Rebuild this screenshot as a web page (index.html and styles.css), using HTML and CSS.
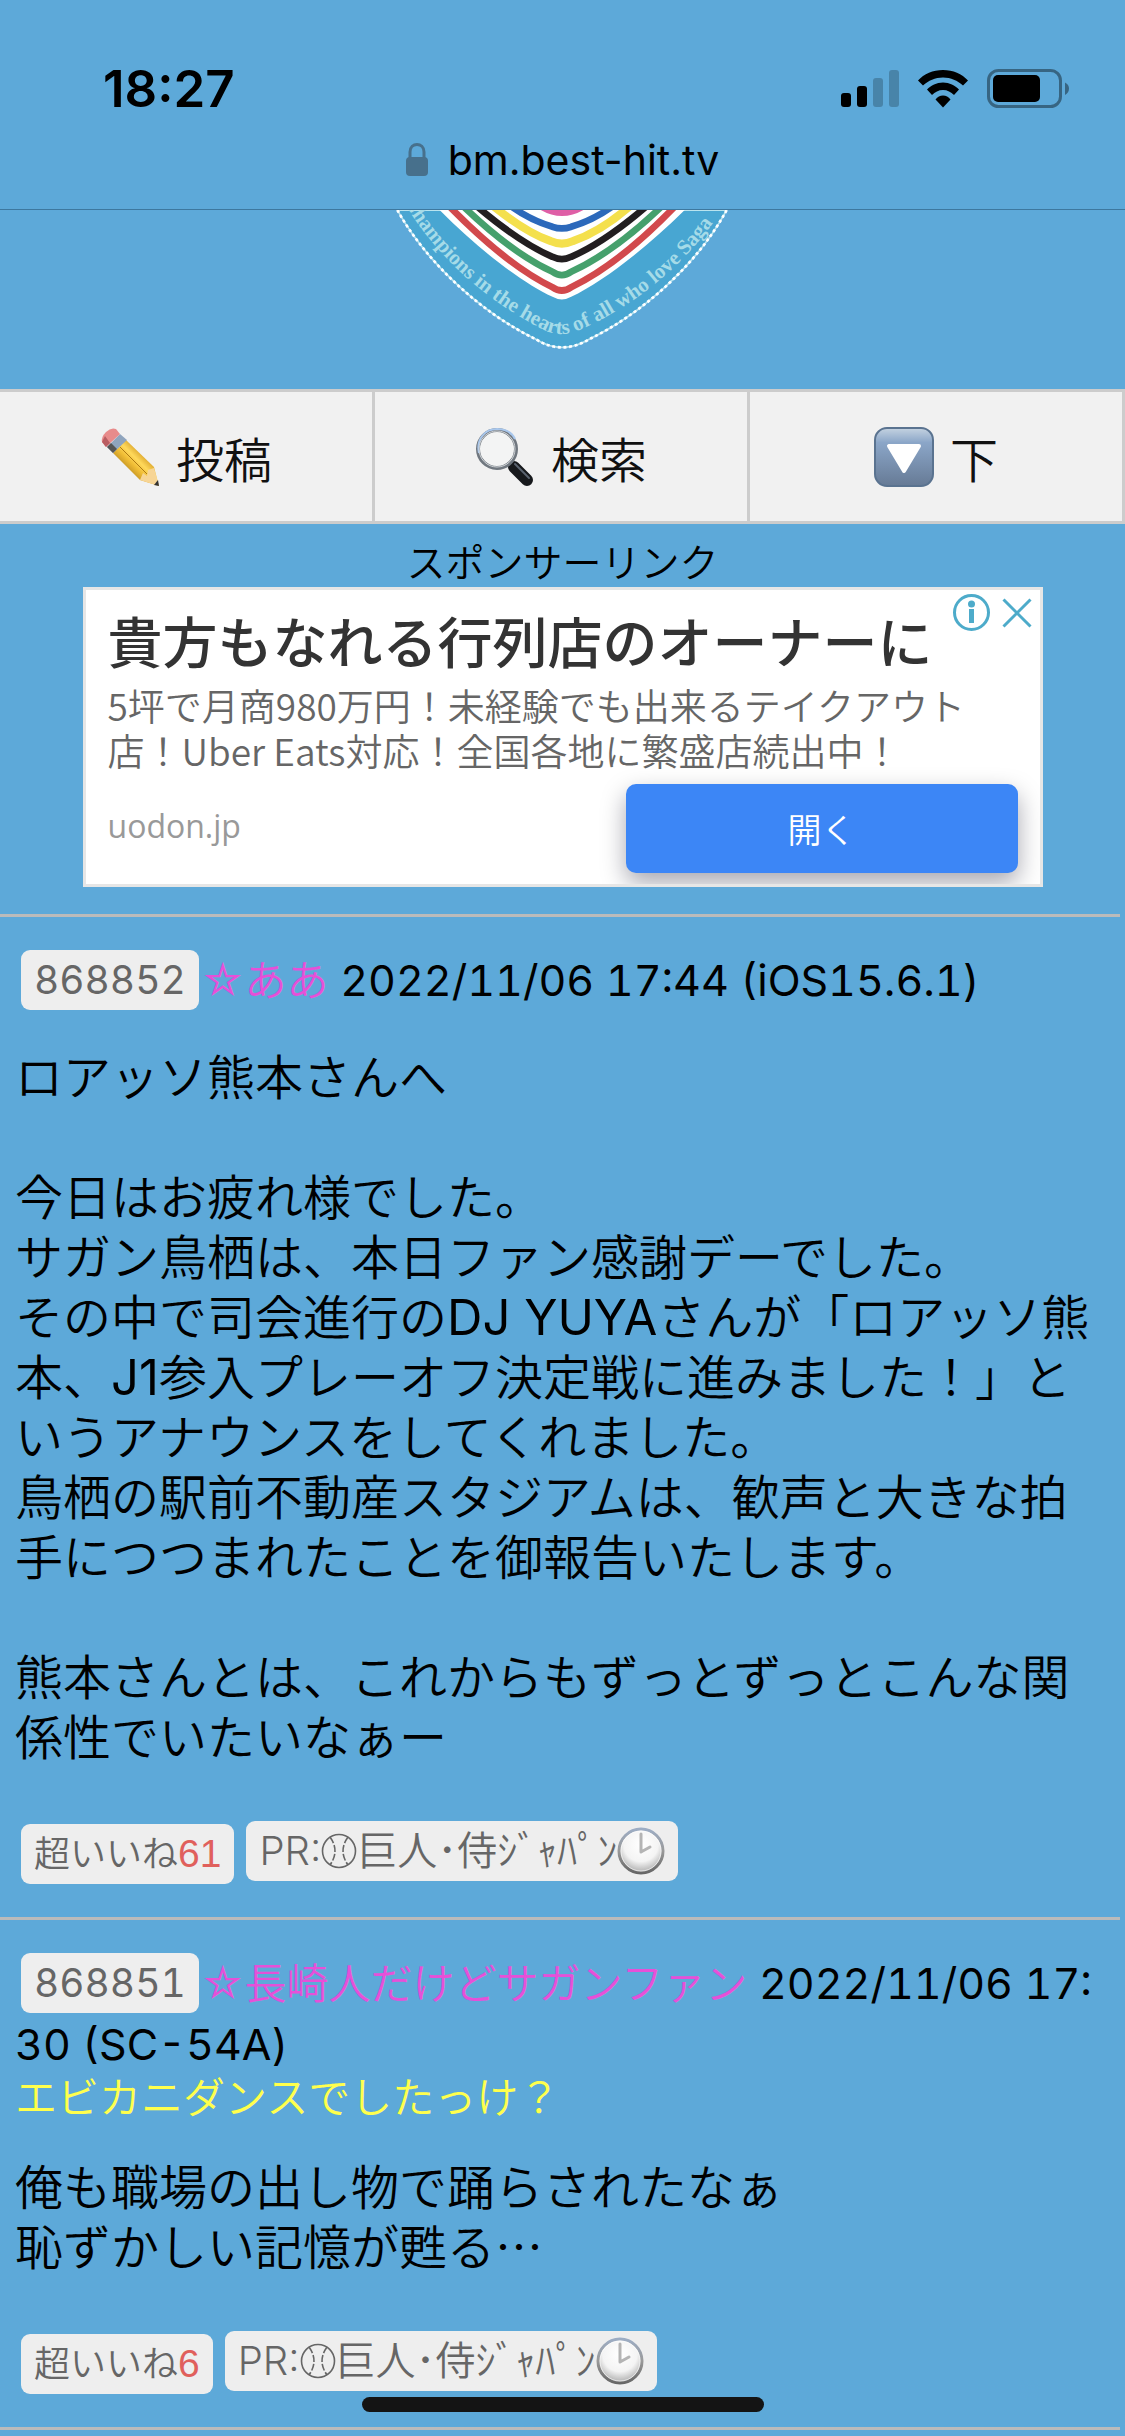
FILE: index.html
```html
<!DOCTYPE html>
<html lang="ja">
<head>
  <meta charset="UTF-8" />
  <meta name="viewport" content="width=device-width, initial-scale=1.0" />
  <title>bm.best-hit.tv</title>
  <link rel="stylesheet" href="styles.css">
</head>
<body>
  <!-- shared icons -->
  <svg class="defs" width="0" height="0" aria-hidden="true">
    <defs>
      <radialGradient id="clockFace" cx="0.5" cy="0.35" r="0.65">
        <stop offset="0" stop-color="#fff" />
        <stop offset="0.6" stop-color="#f4f4f4" />
        <stop offset="1" stop-color="#aaa" />
      </radialGradient>
      <linearGradient id="clockRim" x1="0" y1="0" x2="0" y2="1">
        <stop offset="0" stop-color="#9dadc4" />
        <stop offset="0.5" stop-color="#999" />
        <stop offset="1" stop-color="#666" />
      </linearGradient>
    </defs>
    <symbol id="clock" viewBox="0 0 48 48">
      <circle cx="24" cy="24" r="22" fill="url(#clockFace)" stroke="url(#clockRim)" stroke-width="3" />
      <circle cx="24" cy="24" r="20" fill="none" stroke="#fff" stroke-opacity="0.6" />
      <path d="M24 7V25L33 20" fill="none" stroke="#b4b4b4" stroke-width="3" stroke-linecap="round" stroke-linejoin="round" />
    </symbol>
    <symbol id="ball" viewBox="0 0 36 48">
      <g fill="none" stroke="currentColor" stroke-width="1.6">
        <circle cx="18" cy="24" r="16.5" />
        <path d="M9 10Q19 24 9 38M27 10Q17 24 27 38" stroke-dasharray="7 2" />
      </g>
    </symbol>
  </svg>

  <header class="browser">
    <div class="status">
      <span class="time">18:27</span>
      <div class="status-icons">
        <svg width="58" height="38" viewBox="0 0 58 38" aria-hidden="true">
          <rect x="0" y="23" width="10" height="14" rx="3" />
          <rect x="16" y="16" width="10" height="21" rx="3" />
          <rect x="32" y="8" width="10" height="29" rx="3" opacity="0.22" />
          <rect x="48" y="0" width="10" height="37" rx="3" opacity="0.22" />
        </svg>
        <svg width="52" height="38" viewBox="0 0 52 38" aria-hidden="true">
          <path d="M26 0C16 0 7 4 1 10.500L6 15.500C11.500 10.500 18 7.500 26 7.500S40.500 10.500 46 15.500L51 10.500C45 4 36 0 26 0Z" />
          <path d="M26 12.500C19.500 12.500 14 15.500 10 19.500L15 25C18 22 21.500 20 26 20S34 22 37 25L42 19.500C38 15.500 32.500 12.500 26 12.500Z" />
          <path d="M26 25.500C23 25.500 20.500 27 18.500 29.500L26 37.500L33.500 29.500C31.500 27 29 25.500 26 25.500Z" />
        </svg>
        <svg width="83" height="40" viewBox="0 0 83 40" aria-hidden="true">
          <rect x="1.500" y="1.500" width="72" height="36" rx="10" fill="none" stroke="#000" stroke-opacity="0.4" stroke-width="3" />
          <rect x="6" y="6" width="47" height="27" rx="5" />
          <path d="M78 13.500Q82 15.500 82 19.500T78 26Z" opacity="0.4" />
        </svg>
      </div>
    </div>
    <div class="address">
      <svg width="22" height="34" viewBox="0 0 22 34" aria-hidden="true">
        <path d="M4 16V9C4 -1 18 -1 18 9V16" fill="none" stroke="#47708c" stroke-width="3" />
        <rect x="0" y="14" width="22" height="19" rx="4" fill="#47708c" />
      </svg>
      <span>bm.best-hit.tv</span>
    </div>
  </header>

  <div class="emblem">
    <svg width="367" height="142" viewBox="0 30 1100 425" role="img" aria-label="Champions in the hearts of all who love Saga">
      <path d="M55 30C150 200 320 345 470 417Q548 466 630 417C780 345 950 200 1042 30Z" fill="#48a6d2" stroke="#b9e4ef" stroke-width="5" />
      <path d="M55 30C150 200 320 345 470 417Q548 466 630 417C780 345 950 200 1042 30" fill="none" stroke="#fff" stroke-width="8" stroke-dasharray="9 8" />
      <path d="M180 28C300 150 430 248 520 290Q548 306 576 290C665 248 795 150 918 28Z" fill="#fff" />
      <g fill="none" stroke-width="20">
        <path d="M212 20C330 140 430 218 520 261Q548 281 576 261C666 218 770 140 886 20" stroke="#d2494c" />
        <path d="M254 20C350 112 440 178 520 215Q548 235 576 215C656 178 750 112 846 20" stroke="#45a06c" />
        <path d="M295 20C380 92 450 140 520 170Q548 184 576 170C646 140 716 92 800 20" stroke="#221e20" />
        <path d="M345 20C410 72 460 104 515 123Q548 138 581 123C636 104 690 72 750 20" stroke="#f4e04d" stroke-width="24" />
        <path d="M398 20C440 50 480 68 520 80Q548 90 576 80C616 68 656 50 698 20" stroke="#2c69bb" />
      </g>
      <path d="M470 20Q548 76 628 20Z" fill="#df5fa6" />
      <path id="motto" d="M74 4C115 78 188 168 265 235C345 305 430 358 500 392Q548 412 600 390C760 320 930 190 1040 10" fill="none" />
      <text class="motto"><textPath href="#motto">Champions in the hearts of all who love Saga</textPath></text>
    </svg>
  </div>

  <nav class="menu">
    <a href="#post">
      <svg width="60" height="60" viewBox="0 0 60 60" aria-hidden="true">
        <defs>
          <linearGradient id="wood" x1="0" y1="1" x2="1" y2="0">
            <stop offset="0.3" stop-color="#b98a20" />
            <stop offset="0.45" stop-color="#f0bd35" />
            <stop offset="0.55" stop-color="#ffd95c" />
            <stop offset="0.7" stop-color="#d49b22" />
          </linearGradient>
        </defs>
        <path d="M13 26L26 13L54 40L59 59L40 53Z" fill="url(#wood)" />
        <path d="M40 53L43 46L47 49L48 43L54 41L59 59Z" fill="#f7d595" />
        <path d="M54 58L58 53L59 59Z" fill="#333" />
        <path d="M7 20L20 7L27 13L13 26Z" fill="#8fa4bd" />
        <path d="M7 20L11 16L17 22L13 26Z" fill="#555" />
        <path d="M2 15Q1 10 6 5T16 2L20 7L6 20Z" fill="#e88b8b" />
        <path d="M2 15L6 20L10 16L5 9Z" fill="#b95d62" />
        <path d="M20 20L47 47" stroke="#ad7a13" stroke-width="1" />
      </svg>
      投稿
    </a>
    <a href="#search">
      <svg width="60" height="60" viewBox="0 0 60 60" aria-hidden="true">
        <path d="M32 34L39 41" stroke="#888" stroke-width="6" />
        <path d="M39 40L52 53" stroke="#17191c" stroke-width="12" stroke-linecap="round" />
        <path d="M40 37L54 51" stroke="#5b6470" stroke-width="2" stroke-linecap="round" />
        <circle cx="22" cy="22" r="19" fill="#f3f4f4" stroke="#70777f" stroke-width="4" />
        <path d="M4 26C1 12 10 2 22 2C31 2 37 6 40 12" fill="none" stroke="#a9c7ec" stroke-width="2" />
        <circle cx="22" cy="22" r="18" fill="none" stroke="#d3d7da" stroke-width="1" />
      </svg>
      検索
    </a>
    <a href="#bottom">
      <svg width="60" height="60" viewBox="0 0 60 60" aria-hidden="true">
        <defs>
          <linearGradient id="key" x1="0" y1="0" x2="0" y2="1">
            <stop offset="0" stop-color="#c5d3e1" />
            <stop offset="0.25" stop-color="#8ba6c8" />
            <stop offset="1" stop-color="#667a95" />
          </linearGradient>
        </defs>
        <rect x="1" y="1" width="58" height="58" rx="12" fill="url(#key)" stroke="#5a7390" stroke-width="2" />
        <path d="M15 19H45L30 44Z" fill="#fff" stroke="#fff" stroke-width="4" stroke-linejoin="round" />
      </svg>
      下
    </a>
  </nav>

  <section class="sponsor">
    <div class="sponsor-label">スポンサーリンク</div>
    <div class="ad">
      <div class="ad-tools">
        <button type="button" aria-label="広告について">
          <svg width="37" height="37" viewBox="0 0 37 37" aria-hidden="true">
            <circle cx="18.500" cy="18.500" r="17" fill="none" stroke="#4dabca" stroke-width="3" />
            <circle cx="18.500" cy="10" r="3.500" fill="#4dabca" />
            <rect x="16" y="15" width="5" height="14" fill="#4dabca" />
          </svg>
        </button>
        <button type="button" aria-label="閉じる">
          <svg width="30" height="30" viewBox="0 0 30 30" aria-hidden="true">
            <path d="M1.500 1.500L28.500 28.500M28.500 1.500L1.500 28.500" stroke="#4dabca" stroke-width="3" />
          </svg>
        </button>
      </div>
      <h2 class="ad-title">貴方もなれる行列店のオーナーに</h2>
      <p class="ad-text">5坪で月商980万円！未経験でも出来るテイクアウト<br>店！Uber Eats対応！全国各地に繁盛店続出中！</p>
      <div class="ad-foot">
        <span class="ad-site">uodon.jp</span>
        <button type="button" class="ad-open">開く</button>
      </div>
    </div>
  </section>

  <article class="post">
    <div class="post-head">
      <a class="badge" href="#868852">868852</a><span class="name">☆ああ</span>
      <span class="date">2022/11/06 17:44 (iOS15.6.1)</span>
    </div>
    <p class="post-body">ロアッソ熊本さんへ<br>
<br>
今日はお疲れ様でした。<br>
サガン鳥栖は、本日ファン感謝デーでした。<br>
その中で司会進行の<span class="en">DJ YUYA</span>さんが「ロアッソ熊<br>
本、<span class="en">J1</span>参入プレーオフ決定戦に進みました！」と<br>
いうアナウンスをしてくれました。<br>
鳥栖の駅前不動産スタジアムは、歓声と大きな拍<br>
手につつまれたことを御報告いたします。<br>
<br>
熊本さんとは、これからもずっとずっとこんな関<br>
係性でいたいなぁー</p>
    <div class="post-foot">
      <button type="button" class="badge like">超いいね<b>61</b></button>
      <a class="badge pr" href="#pr">PR:<svg class="ball"><use href="#ball" /></svg>巨人･侍ｼﾞｬﾊﾟﾝ<svg class="clock"><use href="#clock" /></svg></a>
    </div>
  </article>

  <article class="post">
    <div class="post-head">
      <a class="badge" href="#868851">868851</a><span class="name">☆長崎人だけどサガンファン</span>
      <span class="date">2022/11/06 17:<br>30 (SC-54A)</span>
    </div>
    <div class="post-title">エビカニダンスでしたっけ？</div>
    <p class="post-body">俺も職場の出し物で踊らされたなぁ<br>
恥ずかしい記憶が甦る<span class="dots">…</span></p>
    <div class="post-foot">
      <button type="button" class="badge like">超いいね<b>6</b></button>
      <a class="badge pr" href="#pr">PR:<svg class="ball"><use href="#ball" /></svg>巨人･侍ｼﾞｬﾊﾟﾝ<svg class="clock"><use href="#clock" /></svg></a>
    </div>
  </article>

  <div class="home-bar"></div>
</body>
</html>
```
FILE: styles.css
```css
* {
  box-sizing: border-box;
}
body {
  margin: 0;
  background-color: #5da9d9;
  color: #000;
  font-family: Inter, "Noto Sans CJK JP", sans-serif;
  font-weight: 350;
}
a {
  color: inherit;
  text-decoration: none;
}
button {
  border: 0;
  padding: 0;
  background: none;
  font-family: inherit;
  font-weight: inherit;
}
.defs {
  position: absolute;
}

/* browser bar */
.browser {
  height: 210px;
  border-bottom: 1px solid #3d789f;
}
.status {
  display: flex;
  justify-content: space-between;
  align-items: center;
  padding: 60px 55px 0 103px;
}
.time {
  font-size: 51px;
  line-height: 58px;
  font-weight: 600;
}
.status-icons {
  display: flex;
  align-items: center;
  gap: 18px;
}
.address {
  display: flex;
  justify-content: center;
  align-items: center;
  gap: 20px;
  margin-top: 18px;
  font-size: 41px;
  font-weight: 400;
  line-height: 48px;
}

.emblem {
  height: 179px;
  text-align: center;
}
.emblem svg {
  display: block;
  margin: 0 auto;
}
.motto {
  font-family: "Liberation Serif", serif;
  font-size: 63px;
  font-weight: 700;
  fill: #a5dbe8;
}

/* menu */
.menu {
  display: grid;
  grid-template-columns: repeat(3, 1fr);
  border-top: 3px solid #ccc;
  border-bottom: 3px solid #ccc;
  background-color: #f1f1f1;
}
.menu a {
  display: flex;
  justify-content: center;
  align-items: center;
  gap: 16px;
  height: 129px;
  border-right: 3px solid #ccc;
  color: #111;
  font-size: 48px;
}

/* ad */
.sponsor {
  padding: 15px 0 27px;
}
.sponsor-label {
  font-size: 39px;
  line-height: 48px;
  text-align: center;
}
.ad {
  position: relative;
  max-width: 960px;
  margin: 0 auto;
  padding: 18px 22px 11px;
  border: 3px solid #e6e6e6;
  background-color: #fff;
  overflow: hidden;
}
.ad-tools {
  position: absolute;
  top: 4px;
  right: 8px;
  display: flex;
  align-items: center;
  gap: 12px;
}
.ad-tools svg {
  display: block;
}
.ad-title {
  margin: 0 0 5px;
  color: #333;
  font-size: 55px;
  font-weight: 500;
  line-height: 70px;
}
.ad-text {
  margin: 0 0 11px;
  color: #666;
  font-family: "Noto Sans CJK JP", sans-serif;
  font-size: 37px;
  line-height: 45px;
}
.ad-foot {
  display: flex;
  justify-content: space-between;
  align-items: center;
}
.ad-site {
  padding-bottom: 6px;
  color: #999;
  font-family: "Open Sans", sans-serif;
  font-size: 32px;
  font-weight: 400;
}
.ad-open {
  width: 392px;
  height: 89px;
  border-radius: 10px;
  background-color: #3c86f6;
  box-shadow: 0 10px 24px rgba(0, 0, 30, 0.35);
  color: #fff;
  font-size: 34px;
}

/* posts */
.post {
  margin-right: 5px;
  padding: 33px 0 33px 15px;
  border-top: 3px solid #bbb;
}
.post:last-of-type {
  border-bottom: 3px solid #bbb;
}
.post-head {
  font-size: 43px;
  font-weight: 400;
  line-height: 60px;
  font-variant-numeric: tabular-nums;
}
.badge {
  display: inline-block;
  height: 60px;
  margin: 0 6px;
  padding: 0 13px;
  border-radius: 9px;
  background-color: #eee;
  color: #666;
  font-size: 39px;
  line-height: 60px;
  vertical-align: top;
}
.post-head .badge {
  margin-right: 2px;
}
.name {
  color: #e650d8;
  font-size: 42px;
  font-weight: 350;
}
.post-title {
  color: #ffff4d;
  font-size: 42px;
  line-height: 47px;
}
.post-body {
  margin: 37px 0 53px;
  font-size: 48px;
  line-height: 60px;
}
.en {
  font-size: 49px;
  font-weight: 400;
  line-height: 48px;
}
.dots {
  font-family: "Noto Sans CJK JP", sans-serif;
  line-height: 48px;
}
.post-foot {
  display: flex;
}
.like {
  margin-top: 3px;
  font-size: 36px;
}
.like b {
  color: #e0605c;
  font-family: "Liberation Sans", sans-serif;
  font-size: 39px;
  font-weight: 400;
}
.pr {
  display: flex;
  align-items: center;
  font-size: 40px;
}
.ball {
  width: 36px;
  height: 48px;
}
.clock {
  width: 48px;
  height: 48px;
}

.home-bar {
  position: fixed;
  bottom: 24px;
  left: 50%;
  width: 402px;
  height: 15px;
  margin-left: -201px;
  border-radius: 8px;
  background-color: #141414;
}
```
